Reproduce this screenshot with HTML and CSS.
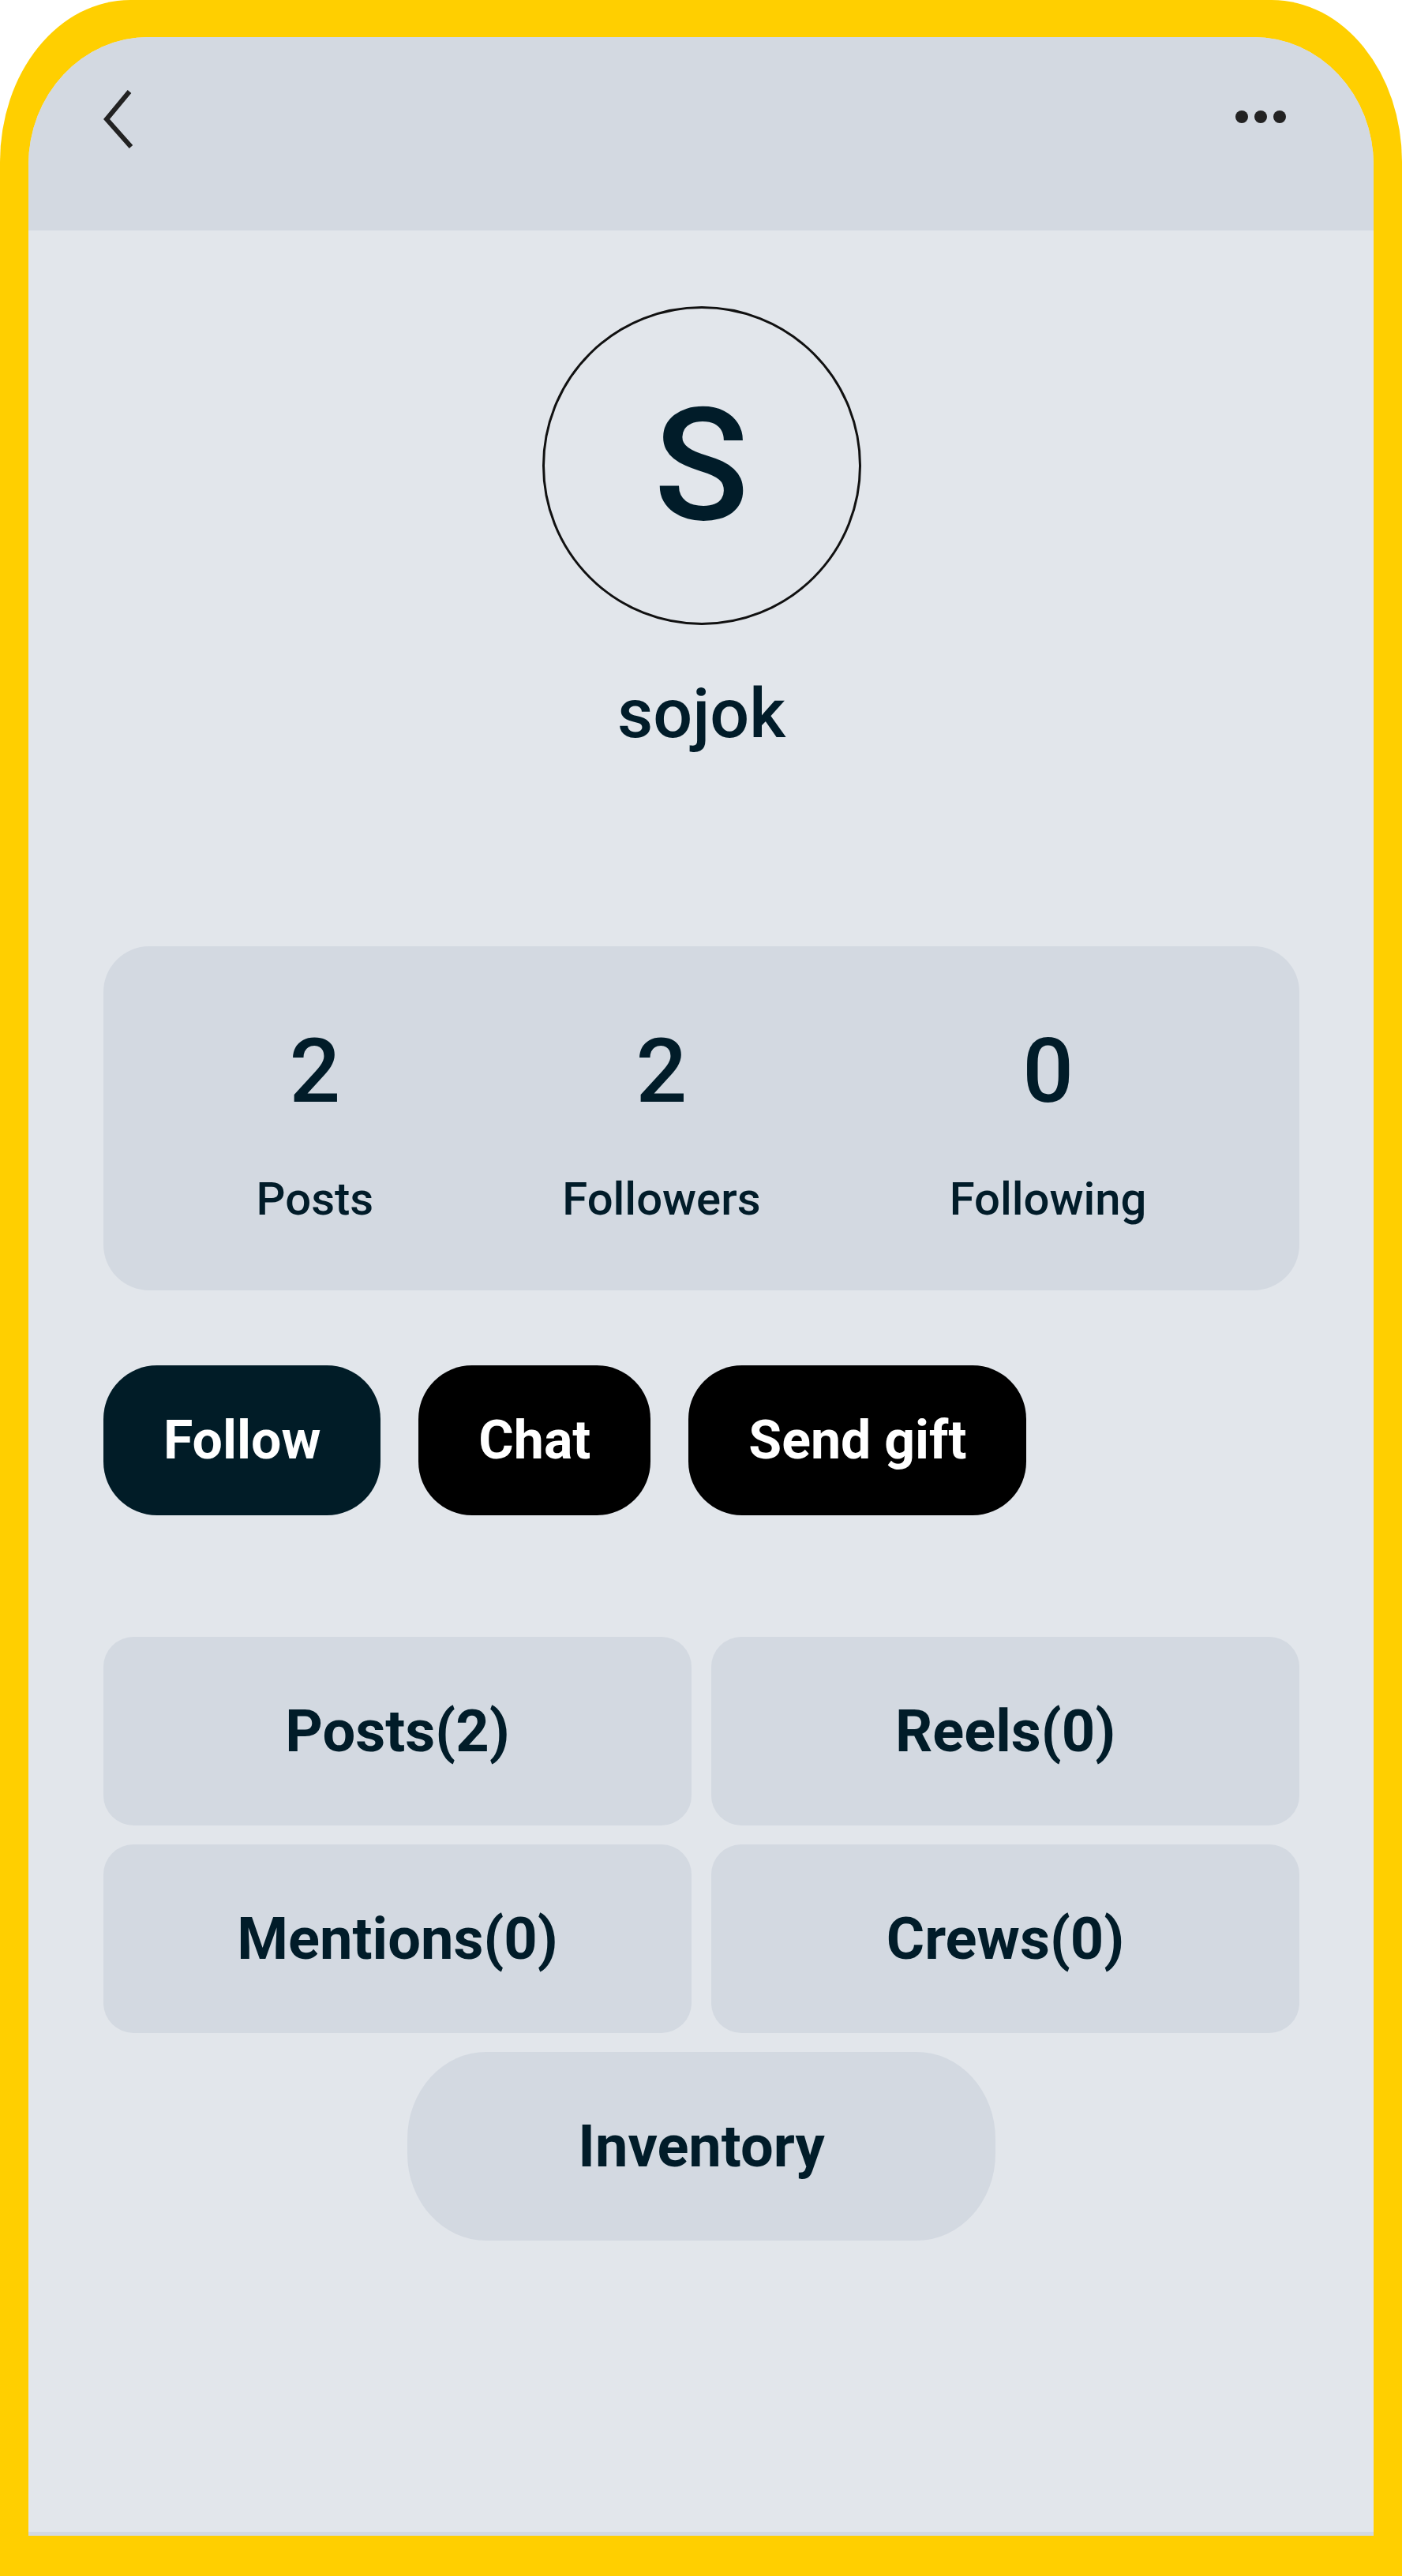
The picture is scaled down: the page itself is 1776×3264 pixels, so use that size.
FILE: index.html
```html
<!DOCTYPE html>
<html lang="en">
<head>
<meta charset="utf-8">
<title>sojok</title>
<link rel="stylesheet" href="styles.css">
</head>
<body>
<div class="frame">
  <div class="screen">
    <header class="topbar">
      <svg class="back" width="44" height="76" viewBox="0 0 44 76" aria-label="Back">
        <path d="M34 3 L5 38 L36 73" fill="none" stroke="#222" stroke-width="6" stroke-linejoin="miter"/>
      </svg>
      <svg class="more" width="66" height="76" viewBox="0 0 66 76" aria-label="More">
        <circle cx="9" cy="35" r="8" fill="#222"/>
        <circle cx="33" cy="35" r="8" fill="#222"/>
        <circle cx="57" cy="35" r="8" fill="#222"/>
      </svg>
    </header>

    <main class="content">
      <div class="avatar"><span>S</span></div>
      <h1 class="name">sojok</h1>

      <section class="stats">
        <div class="stat"><div class="num">2</div><div class="label">Posts</div></div>
        <div class="stat"><div class="num">2</div><div class="label">Followers</div></div>
        <div class="stat"><div class="num">0</div><div class="label">Following</div></div>
      </section>

      <div class="actions">
        <button class="btn btn-follow">Follow</button>
        <button class="btn">Chat</button>
        <button class="btn">Send gift</button>
      </div>

      <div class="tabs">
        <div class="tab">Posts(2)</div>
        <div class="tab">Reels(0)</div>
        <div class="tab">Mentions(0)</div>
        <div class="tab">Crews(0)</div>
        <div class="tab tab-wide">Inventory</div>
      </div>
    </main>
    <div class="bottom-line"></div>
  </div>
</div>
</body>
</html>
```

FILE: styles.css
```css
* { box-sizing: border-box; }
html, body { margin: 0; padding: 0; background: #ffffff; }
body { font-family: Roboto, "Noto Sans", "Liberation Sans", sans-serif; color: #011c29; }

.frame {
  width: 1776px;
  height: 3264px;
  background: #ffcf00;
  border-radius: 165px 165px 0 0 / 205px 205px 0 0;
  padding: 47px 36px 51px 36px;
}

.screen {
  height: 3166px;
  background: #e2e6eb;
  border-radius: 152px 152px 0 0 / 162px 162px 0 0;
  overflow: hidden;
  display: flex;
  flex-direction: column;
}

.topbar {
  height: 245px;
  flex: none;
  background: #d3d9e1;
  display: flex;
  justify-content: space-between;
  align-items: flex-start;
  padding: 66px 110px 0 94px;
}
.back, .more { display: block; }

.content {
  flex: 1;
  padding: 96px 94px 0 95px;
  display: flex;
  flex-direction: column;
  align-items: center;
}

.avatar {
  width: 404px;
  height: 404px;
  border: 3.5px solid #111;
  border-radius: 50%;
  display: flex;
  align-items: center;
  justify-content: center;
}
.avatar span {
  font-size: 198px;
  font-weight: 500;
  line-height: 1;
  color: #011c29;
}

.name {
  margin: 68px 0 0 0;
  font-size: 88px;
  line-height: 88px;
  font-weight: 500;
  color: #011c29;
}

.stats {
  margin-top: 251px;
  width: 100%;
  height: 436px;
  background: #d3d9e1;
  border-radius: 58px;
  display: flex;
  justify-content: space-around;
  padding: 101px 74px 0 74px;
}
.stat {
  display: flex;
  flex-direction: column;
  align-items: center;
}
.num {
  font-size: 114px;
  line-height: 114px;
  font-weight: 500;
}
.label {
  margin-top: 76px;
  font-size: 58px;
  line-height: 58px;
  font-weight: 500;
}

.actions {
  margin-top: 95px;
  width: 100%;
  display: flex;
  gap: 48px;
}
.btn {
  height: 190px;
  border: none;
  border-radius: 68px;
  background: #000000;
  color: #ffffff;
  font-family: Roboto, "Noto Sans", "Liberation Sans", sans-serif;
  font-size: 68px;
  font-weight: 700;
  padding: 0 76px;
}
.btn-follow { background: #011c27; }

.tabs {
  margin-top: 154px;
  width: 100%;
  display: grid;
  grid-template-columns: 1fr 1fr;
  column-gap: 25px;
  row-gap: 24px;
}
.tab {
  height: 239px;
  background: #d3d9e1;
  border-radius: 38px;
  display: flex;
  align-items: center;
  justify-content: center;
  font-size: 74px;
  font-weight: 700;
  color: #011c29;
}
.tab-wide {
  grid-column: 1 / span 2;
  justify-self: center;
  width: 745px;
  border-radius: 100px / 110px;
}

.bottom-line {
  height: 5px;
  flex: none;
  background: #d3d9e1;
}
```
